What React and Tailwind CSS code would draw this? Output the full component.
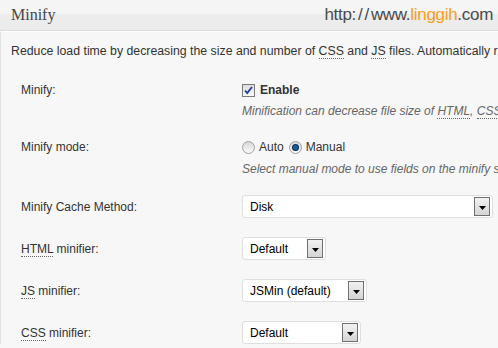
import React from 'react';

const Abbr = ({ children }) => (
  <span className="border-b border-dotted border-[#666]">{children}</span>
);

const Arrow = () => (
  <span className="flex h-[19px] w-[16px] items-center justify-center border border-[#707070] bg-[linear-gradient(#f2f2f2,#d4d4d4)]">
    <svg width="7" height="4" viewBox="0 0 7 4" className="mt-[2px]">
      <path d="M0 0h7L3.5 4z" fill="#000" />
    </svg>
  </span>
);

const Select = ({ value, width }) => (
  <div
    className={`flex h-[23px] items-center justify-between rounded-[3px] border border-[#dfdfdf] bg-white pl-[7px] pr-[2px] text-[12px] text-black ${width}`}
  >
    <span>{value}</span>
    <Arrow />
  </div>
);

const Checkbox = () => (
  <span className="flex h-[13px] w-[13px] items-center justify-center border border-[#7b7b7b] bg-[linear-gradient(#dcdcdc,#fbfbfb)]">
    <svg width="9" height="9" viewBox="0 0 9 9">
      <path d="M1 4.5l2.2 2.5L8 1" stroke="#21399a" strokeWidth="1.8" fill="none" />
    </svg>
  </span>
);

const Radio = ({ checked }) => (
  <span className="flex h-[13px] w-[13px] items-center justify-center rounded-full border border-[#a0a0a0] bg-[linear-gradient(#d8d8d8,#fafafa)]">
    {checked && <span className="h-[5px] w-[5px] rounded-full bg-[#1a5b9a] ring-1 ring-[#0b2e57]" />}
  </span>
);

const Label = ({ children }) => (
  <div className="w-[221px] shrink-0 text-[12px] text-[#333]">{children}</div>
);

export default function App() {
  return (
    <div className="h-[348px] w-[498px] overflow-hidden bg-[#f7f7f7] font-['Liberation_Sans',Arial,sans-serif] whitespace-nowrap">
      <div className="flex h-[31px] items-center justify-between border-b border-[#dcdcdc] bg-[linear-gradient(#f5f5f5_0,#f5f5f5_14px,#ececec_14px)] pl-[11px] pr-[5px]">
        <h3 className="font-['Liberation_Serif',Georgia,serif] text-[16px] text-[#464646]">Minify</h3>
        <div className="text-[17px] tracking-[-0.3px] text-[#4a4a4a]">
          http:<span className="mx-[2px]">/</span>
          <span className="mr-[2px]">/</span>www.<span className="text-[#f5a01a]">linggih</span>.com
        </div>
      </div>

      <div className="border-l border-[#e2e2e2] border-t border-t-white pl-[10px]">
        <p className="mt-[11px] text-[12.3px] leading-[16px] text-[#333]">
          Reduce load time by decreasing the size and number of <Abbr>CSS</Abbr> and <Abbr>JS</Abbr> files. Automatically remove unncessary data from <Abbr>CSS</Abbr>, <Abbr>JS</Abbr>, feed, page and post <Abbr>HTML</Abbr>.
        </p>

        <div className="pl-[10px] text-[12px] leading-[16px]">
          <div className="mt-[23px] flex">
            <Label>Minify:</Label>
            <div>
              <div className="flex h-[16px] items-center gap-[5px]">
                <Checkbox />
                <span className="font-bold text-[#333]">Enable</span>
              </div>
              <div className="mt-[5px] italic text-[#666]">
                Minification can decrease file size of <Abbr>HTML</Abbr>, <Abbr>CSS</Abbr>, <Abbr>JS</Abbr> and feeds respectively by ~10% on average.
              </div>
            </div>
          </div>

          <div className="mt-[20px] flex">
            <Label>Minify mode:</Label>
            <div>
              <div className="flex h-[16px] items-center text-[#333]">
                <Radio />
                <span className="ml-[4px]">Auto</span>
                <span className="ml-[5px]"><Radio checked /></span>
                <span className="ml-[4px]">Manual</span>
              </div>
              <div className="mt-[6px] italic text-[#666]">
                Select manual mode to use fields on the minify settings tab to specify files, otherwise files will be automatically minified.
              </div>
            </div>
          </div>

          <div className="mt-[18px] flex items-center">
            <Label>Minify Cache Method:</Label>
            <Select value="Disk" width="w-[251px]" />
          </div>

          <div className="mt-[19px] flex items-center">
            <Label><Abbr>HTML</Abbr> minifier:</Label>
            <Select value="Default" width="w-[84px]" />
          </div>

          <div className="mt-[19px] flex items-center">
            <Label><Abbr>JS</Abbr> minifier:</Label>
            <Select value="JSMin (default)" width="w-[125px]" />
          </div>

          <div className="mt-[19px] flex items-center">
            <Label><Abbr>CSS</Abbr> minifier:</Label>
            <Select value="Default" width="w-[119px]" />
          </div>
        </div>
      </div>
    </div>
  );
}
